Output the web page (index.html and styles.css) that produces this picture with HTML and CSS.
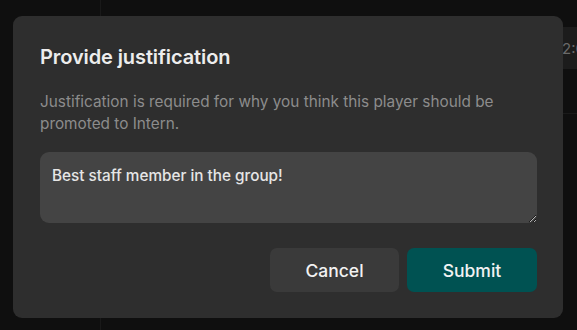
FILE: index.html
```html
<!DOCTYPE html>
<html lang="en">
<head>
<meta charset="utf-8">
<title>Provide justification</title>
<link rel="stylesheet" href="styles.css">
</head>
<body>
<div class="page">
  <aside class="sidebar"></aside>
  <main class="main">
    <div class="table">
      <div class="row row-head">
        <span class="cell cell-spacer"></span>
        <span class="cell cell-time">12:00</span>
      </div>
      <div class="row"></div>
    </div>
  </main>
</div>

<div class="backdrop">
  <div class="dialog" role="dialog" aria-labelledby="dlg-title">
    <h2 class="dialog-title" id="dlg-title">Provide justification</h2>
    <p class="dialog-desc">Justification is required for why you think this player should be promoted to Intern.</p>
    <textarea class="dialog-input">Best staff member in the group!</textarea>
    <div class="dialog-actions">
      <button class="btn btn-cancel" type="button">Cancel</button>
      <button class="btn btn-submit" type="button">Submit</button>
    </div>
  </div>
</div>
</body>
</html>
```

FILE: styles.css
```css
* { box-sizing: border-box; }

html, body {
  margin: 0;
  height: 100%;
  background: #0f0f0f;
  font-family: "Inter", "Noto Sans", sans-serif;
  overflow: hidden;
}

.page {
  display: flex;
  height: 100%;
}

.sidebar {
  width: 101px;
  flex: none;
  border-right: 1px solid #191919;
}

.main {
  flex: 1;
  padding-top: 27px;
}

.table {
  display: flex;
  flex-direction: column;
}

.row {
  display: flex;
  align-items: center;
  height: 45px;
  border-bottom: 1px solid #1a1a1a;
}

.row-head {
  height: 42px;
  background: #1c1c1c;
  border-bottom: none;
}

.cell {
  color: #6a6a6a;
  font-size: 15px;
  white-space: nowrap;
}

.cell-spacer { width: 455px; flex: none; }

.backdrop {
  position: fixed;
  inset: 0;
}

.dialog {
  position: absolute;
  left: 13px;
  top: 16px;
  width: 550px;
  height: 302px;
  background: #2e2e2e;
  border-radius: 9px;
  padding: 27px 26px 26px 27px;
  display: flex;
  flex-direction: column;
}

.dialog-title {
  margin: 0;
  font-size: 20px;
  line-height: 28px;
  font-weight: 600;
  color: #ededed;
  letter-spacing: -0.1px;
}

.dialog-desc {
  margin: 20px 0 0;
  font-size: 15.35px;
  line-height: 22px;
  color: #8c8c8c;
}

.dialog-input {
  margin-top: 17px;
  width: 100%;
  height: 71px;
  background: #444444;
  border: none;
  border-radius: 9px;
  padding: 13px 12px;
  font-family: inherit;
  font-size: 15.3px;
  line-height: 22px;
  font-weight: 500;
  color: #e6e6e6;
  outline: none;
  resize: vertical;
}

.dialog-actions {
  margin-top: auto;
  display: flex;
  justify-content: flex-end;
  gap: 8px;
}

.btn {
  width: 129px;
  height: 44px;
  border: none;
  border-radius: 7px;
  font-family: inherit;
  font-size: 17.5px;
  font-weight: 500;
  color: #f2f2f2;
  cursor: pointer;
}

.btn-cancel { background: #3a3a3a; }
.btn-submit { width: 130px; background: #005252; }
```
